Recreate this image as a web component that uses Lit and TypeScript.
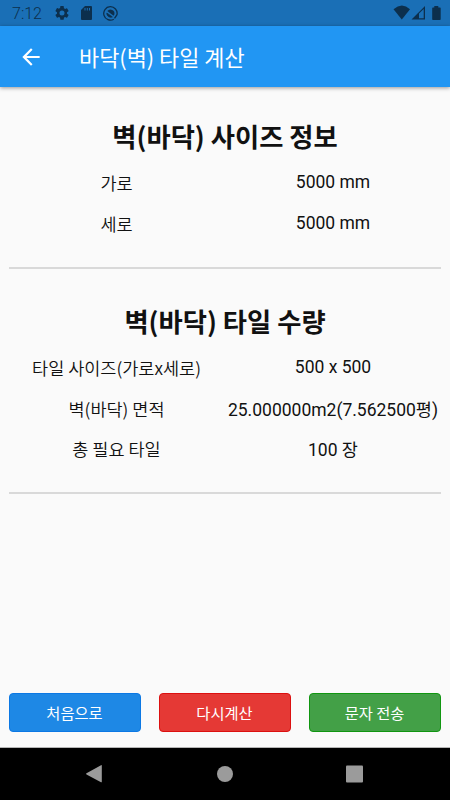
import { LitElement, html, css } from "lit";
import { customElement, property } from "lit/decorators.js";

type Row = { label: string; value: string };

@customElement("info-section")
class InfoSection extends LitElement {
  @property() heading = "";
  @property({ attribute: false }) rows: Row[] = [];

  static styles = css`
    :host { display: block; padding-top: 30px; border-bottom: 2px solid #d9d9d9; }
    .heading {
      margin: 0; height: 45px; line-height: 37px; text-align: center;
      font-size: 26.3px; font-weight: 700; color: #111; white-space: nowrap;
      font-family: "Noto Sans CJK KR", sans-serif;
    }
    .row { display: grid; grid-template-columns: 1fr 1fr; height: 40.5px; }
    .label, .value { text-align: center; font-size: 17.5px; line-height: 41px; white-space: nowrap; color: #111; }
    .label { font-family: "Noto Sans CJK KR", sans-serif; font-weight: 350; padding-right: 1px; }
    .value { font-family: Roboto, "Noto Sans CJK KR", sans-serif; }
    .row:nth-child(n + 2) .value { line-height: 40px; }
    .row:nth-child(n + 2) .value.mixed { line-height: 44px; }
    .rows { padding-bottom: 23px; }
  `;

  render() {
    return html`
      <h2 class="heading">${this.heading}</h2>
      <div class="rows">
        ${this.rows.map(
          (r) => html`<div class="row"><div class="label">${r.label}</div><div class="value ${/[가-힣]/.test(r.value) ? "mixed" : ""}">${r.value}</div></div>`
        )}
      </div>
    `;
  }
}

@customElement("app-root")
class AppRoot extends LitElement {
  private wall: Row[] = [
    { label: "가로", value: "5000 mm" },
    { label: "세로", value: "5000 mm" },
  ];
  private tiles: Row[] = [
    { label: "타일 사이즈(가로x세로)", value: "500 x 500" },
    { label: "벽(바닥) 면적", value: "25.000000m2(7.562500평)" },
    { label: "총 필요 타일", value: "100 장" },
  ];

  static styles = css`
    :host {
      display: flex; flex-direction: column; width: 450px; height: 800px; overflow: hidden;
      background: #fafafa; font-family: Roboto, "Noto Sans CJK KR", sans-serif;
    }
    svg { display: block; }
    .status {
      height: 26px; flex: none; box-sizing: border-box; background: #1a6fb6; color: #0c2f4d;
      display: flex; align-items: center; padding: 0 7px 0 12px;
    }
    .clock { width: 43px; font-size: 16px; font-weight: 350; line-height: 26px; padding-top: 2px; }
    .icons { display: flex; gap: 8px; flex: 1; }
    .bar {
      height: 61px; flex: none; display: flex; align-items: center; background: #2196f3;
      color: #fff; padding-left: 18px; box-shadow: 0 1px 4px rgba(0, 0, 0, 0.4); z-index: 1;
    }
    .title {
      margin: 0 0 0 35px; font-size: 21.9px; line-height: 30px; font-weight: 400;
      font-family: "Noto Sans CJK KR", sans-serif; white-space: nowrap;
    }
    .content { flex: 1; padding: 0 9px; }
    .wall { height: 150px; }
    .tiles { padding-top: 33px; }
    .actions { display: grid; grid-template-columns: repeat(3, 132px); gap: 18px; padding: 0 9px 15px; }
    .btn {
      height: 39px; box-sizing: border-box; border: 1px solid; border-radius: 4px; color: #fff;
      padding: 0 1px 0 0; font: 400 15.3px/37px "Noto Sans CJK KR", sans-serif; text-align: center;
    }
    .blue { background: #1e88e5; border-color: #0c78e4; }
    .red { background: #e53935; border-color: #dc1010; }
    .green { background: #43a047; border-color: #109610; }
    .nav {
      height: 53px; flex: none; box-sizing: border-box; background: #000; border-top: 1px solid #b5b5b5;
    }
  `;

  render() {
    return html`
      <div class="status">
        <div class="clock">7:12</div>
        <div class="icons">
          <svg width="14" height="14" viewBox="2 2 20 20" fill="currentColor">
            <path d="M19.14 12.94a7 7 0 0 0 0-1.88l2.03-1.58a.5.5 0 0 0 .12-.61l-1.92-3.32a.5.5 0 0 0-.59-.22l-2.39.96a7 7 0 0 0-1.62-.94l-.36-2.54A.5.5 0 0 0 13.92 2h-3.84a.5.5 0 0 0-.47.41l-.36 2.54a7 7 0 0 0-1.62.94l-2.39-.96a.5.5 0 0 0-.59.22L2.74 8.87a.5.5 0 0 0 .12.61l2.03 1.58a7 7 0 0 0 0 1.88l-2.03 1.58a.5.5 0 0 0-.12.61l1.92 3.32c.12.22.37.29.59.22l2.39-.96c.5.38 1.03.7 1.62.94l.36 2.54c.05.24.24.41.48.41h3.84c.24 0 .44-.17.47-.41l.36-2.54a7 7 0 0 0 1.62-.94l2.39.96c.22.08.47 0 .59-.22l1.92-3.32a.5.5 0 0 0-.12-.61zM12 15.6a3.6 3.6 0 1 1 0-7.2 3.6 3.6 0 0 1 0 7.2z" />
          </svg>
          <svg width="18" height="14" viewBox="0 0 18 14" fill="currentColor">
            <path fill-rule="evenodd" d="M8 0h6q1 0 1 1v12q0 1-1 1H5q-1 0-1-1V4zM7.5 2v2.5h1V2zM9.8 2v2.5h1V2zM12 2v2.5h1V2z" />
          </svg>
          <svg width="15" height="15" viewBox="0 0 15 15" fill="none" stroke="currentColor">
            <path d="M10.8 13.2A6.700 6.700 0 1 1 14 8.7L11.500 12.300" stroke-width="1.300" />
            <path d="M4.300 5A4 4 0 0 1 11.300 8.500L10.600 9.800Z" fill="currentColor" stroke="none" />
            <path d="M3.800 7A3.900 3.900 0 0 0 9.300 10.900Z" fill="currentColor" stroke-width=".7" />
          </svg>
        </div>
        <svg width="50" height="16" viewBox="0 0 50 16" fill="currentColor">
          <path d="M0.5 4.2Q9-3 17 4.200L8.800 14.500z" />
          <path fill-rule="evenodd" d="M18.500 14.500L32 1v13.500zM26 8.500v4.700h4.700V4z" />
          <path d="M41.300 1h4v1.500H47q.7 0 .7.700v11q0 .8-.8.800h-7q-.7 0-.7-.7v-11q0-.8.7-.8h1.400z" />
        </svg>
      </div>
      <header class="bar">
        <svg width="26" height="26" viewBox="0 0 24 24" fill="#fff">
          <path d="M20 11H7.830l5.590-5.590L12 4l-8 8 8 8 1.410-1.410L7.830 13H20z" />
        </svg>
        <h1 class="title">바닥(벽) 타일 계산</h1>
      </header>
      <main class="content">
        <info-section class="wall" heading="벽(바닥) 사이즈 정보" .rows=${this.wall}></info-section>
        <info-section class="tiles" heading="벽(바닥) 타일 수량" .rows=${this.tiles}></info-section>
      </main>
      <div class="actions">
        <div class="btn blue">처음으로</div>
        <div class="btn red">다시계산</div>
        <div class="btn green">문자 전송</div>
      </div>
      <nav class="nav">
        <svg width="450" height="52" viewBox="0 0 450 52" fill="#9b9b9b">
          <path d="M86.5 25.2L101 17.2q.8-.4.8.5v16q0 .9-.8.5L86.5 26.400q-1-.6 0-1.200z" />
          <circle cx="225" cy="26" r="8" />
          <rect x="346" y="17.5" width="17" height="17" rx="1" />
        </svg>
      </nav>
    `;
  }
}
